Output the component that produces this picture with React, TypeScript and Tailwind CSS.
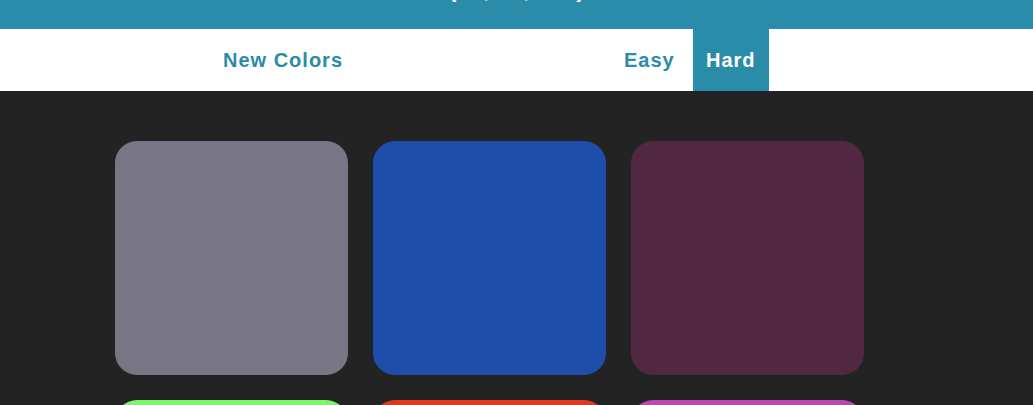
export default function App() {
  const font = { fontFamily: '"Liberation Sans", Arial, sans-serif' };
  const colors = ["#787585", "#1e4ea9", "#522742", "#7cf66e", "#e0381f", "#b84aaf"];
  return (
    <div className="w-[1033px] h-[405px] overflow-hidden bg-[#232323]" style={font}>
      <div className="h-[29px] overflow-hidden bg-[#2b8ca9]">
        <h1 className="mt-[-25px] text-center text-white font-bold text-[24px] leading-[28px]">
          (30, 78, 168)
        </h1>
      </div>
      <div className="h-[62px] bg-white flex items-stretch pl-[210px]">
        <button className="px-[13px] text-[20px] font-bold tracking-[1px] text-[#2b8ca9] bg-white">
          New Colors
        </button>
        <button className="ml-[255px] px-[13px] text-[20px] font-bold tracking-[1px] text-[#2b8ca9] bg-white">
          Easy
        </button>
        <button className="ml-[5px] w-[76px] text-[20px] font-bold tracking-[1px] text-white bg-[#2b8ca9]">
          Hard
        </button>
      </div>
      <div className="pt-[50px] pl-[115px] grid grid-cols-[233px_233px_233px] gap-[25px] auto-rows-[234px]">
        {colors.map((c, i) => (
          <div key={i} className="rounded-[22px]" style={{ backgroundColor: c }} />
        ))}
      </div>
    </div>
  );
}
